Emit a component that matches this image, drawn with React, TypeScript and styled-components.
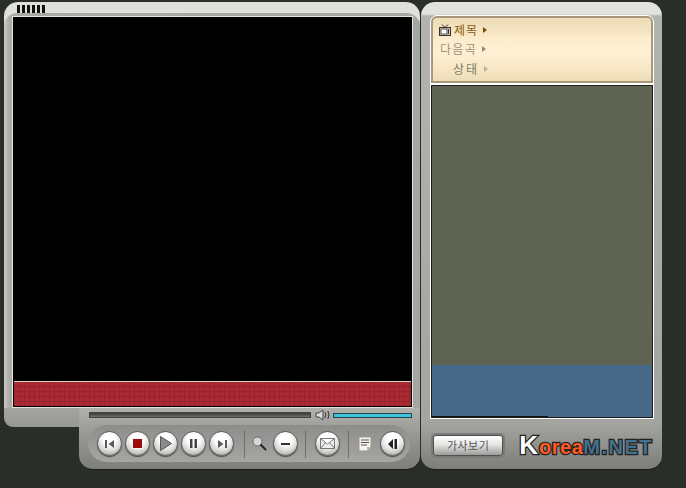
import React from 'react'
import styled, { createGlobalStyle } from 'styled-components'

const Global = createGlobalStyle`
  html, body { margin: 0; padding: 0; background: #2a2e2a; }
  body { font-family: "Noto Sans CJK KR", "Liberation Sans", sans-serif; overflow: hidden; }
`

const Player = styled.div`
  width: 686px;
  height: 488px;
  box-sizing: border-box;
  padding: 2px 0 0 4px;
  display: flex;
  gap: 1px;
`

const LeftColumn = styled.div`
  width: 416px;
  display: flex;
  flex-direction: column;
`

const ScreenPanel = styled.div`
  height: 406px;
  box-sizing: border-box;
  padding: 3px 8px 0 9px;
  border-radius: 14px 14px 0 0;
  background: linear-gradient(90deg, #c9cac6 0, #a9aaa6 6px, #a5a6a2 100%);
  background-color: #b5b6b2;
  box-shadow: inset 0 12px 0 -1px #dfdfdb;
`

const Grip = styled.div`
  height: 8px;
  margin: 0 0 4px 4px;
  display: flex;
  gap: 2px;
`

const GripBar = styled.span`
  width: 3px;
  height: 8px;
  background: #111;
`

const ScreenFrame = styled.div`
  height: 390px;
  box-sizing: border-box;
  border: 1px solid #000;
  outline: 1px solid #e6e6de;
  display: flex;
  flex-direction: column;
  background: #000;
`

const Video = styled.div`
  flex: 1;
  background: #000;
  border-bottom: 1px solid #d8d4c8;
`

const Caption = styled.div`
  height: 24px;
  background-color: #aa2a34;
  background-image:
    linear-gradient(90deg, rgba(120, 20, 30, 0.3) 1px, transparent 1px),
    linear-gradient(0deg, rgba(120, 20, 30, 0.3) 1px, transparent 1px);
  background-size: 5px 5px;
`

const LowerRow = styled.div`
  display: flex;
`

const Stub = styled.div`
  width: 75px;
  height: 19px;
  border-radius: 0 0 0 9px;
  background: linear-gradient(180deg, #a4a5a1, #979896);
`

const ControlPanel = styled.div`
  width: 341px;
  height: 62px;
  box-sizing: border-box;
  padding: 2px 8px 0 10px;
  border-radius: 0 0 14px 14px;
  background: linear-gradient(180deg, #b0b1ad 0, #9a9b97 40%, #7d7e7a 100%);
  border-bottom: 1px solid #1a1c1a;
`

const SeekRow = styled.div`
  height: 10px;
  display: flex;
  align-items: center;
`

const SeekTrack = styled.div`
  width: 223px;
  height: 6px;
  background: linear-gradient(180deg, #3a3a3a, #6e6e6e);
  border: 1px solid #444;
  box-sizing: border-box;
`

const VolumeIcon = styled.svg`
  width: 16px;
  height: 12px;
  margin: 0 3px 0 4px;
`

const VolumeTrack = styled.div`
  width: 79px;
  height: 5px;
  box-sizing: border-box;
  background: #3dc2dc;
  border: 1px solid #28444c;
`

const ButtonTray = styled.div`
  margin: 5px 0 0 -1px;
  height: 37px;
  width: 322px;
  box-sizing: border-box;
  padding: 0 6px 0 9px;
  border-radius: 19px;
  background: linear-gradient(180deg, #8d8e8b, #a6a7a3);
  display: flex;
  align-items: center;
  gap: 3px;

  svg {
    flex: none;
  }
`

const RoundButton = styled.button<{ $gapLeft?: number }>`
  width: 25px;
  height: 25px;
  padding: 0;
  margin-left: ${(p) => p.$gapLeft ?? 0}px;
  border: 1px solid #5e5f5c;
  border-radius: 50%;
  background: radial-gradient(circle at 50% 30%, #ffffff 30%, #d8d8d6 62%, #8e8f8c 100%);
  box-shadow: 0 1px 1px #4a4b48;
  display: flex;
  align-items: center;
  justify-content: center;
  flex: none;
`

const Divider = styled.span<{ $left: number; $right: number }>`
  width: 1px;
  height: 28px;
  background: #6f706d;
  margin: 0 ${(p) => p.$right}px 0 ${(p) => p.$left}px;
  flex: none;
`

const SidePanel = styled.div`
  width: 241px;
  height: 468px;
  box-sizing: border-box;
  padding: 14px 9px 0 10px;
  border-radius: 14px;
  border-bottom: 1px solid #1a1c1a;
  background: linear-gradient(180deg, #e2e2de 0, #e2e2de 12px, #b3b4b0 14px, #a4a5a1 420px, #7d7e7a 100%);
`

const InfoBox = styled.div`
  height: 67px;
  box-sizing: border-box;
  padding: 2px 0 0 5px;
  border: 2px solid #a8977a;
  outline: 1px solid #fff;
  border-radius: 6px 6px 0 0;
  background: linear-gradient(
    180deg,
    #eddcb6 0,
    #f6e6c4 24%,
    #fbebcb 30%,
    #fff0d4 55%,
    #f8e8c6 78%,
    #ecdcb6 100%
  );
  display: flex;
  flex-direction: column;
`

const InfoRow = styled.div<{ $indent?: number }>`
  height: 19.5px;
  padding-left: ${(p) => p.$indent ?? 0}px;
  display: flex;
  align-items: center;
`

const InfoIconSlot = styled.div`
  width: 15px;
  height: 14px;
  flex: none;
  display: flex;
  align-items: center;
`

const InfoLabel = styled.span<{ $color: string; $spacing: number }>`
  font-size: 12px;
  color: ${(p) => p.$color};
  letter-spacing: ${(p) => p.$spacing}px;
  line-height: 14px;
`

const Caret = styled.span<{ $color: string }>`
  width: 0;
  height: 0;
  margin-left: 5px;
  border-left: 4px solid ${(p) => p.$color};
  border-top: 3px solid transparent;
  border-bottom: 3px solid transparent;
`

const ListFrame = styled.div`
  margin-top: 2px;
  height: 333px;
  box-sizing: border-box;
  border: 1px solid #1c1c1c;
  outline: 1px solid #fff;
  background: #5f6352;
  display: flex;
  flex-direction: column;
  justify-content: flex-end;
`

const BlueBlock = styled.div`
  height: 52px;
  display: flex;
  align-items: flex-end;
  background: #48688a;
`

const ListProgress = styled.div`
  width: 116px;
  height: 1px;
  background: #111;
`

const SideFooter = styled.div`
  margin-top: 13px;
  display: flex;
  align-items: center;
  padding-left: 2px;
`

const LyricsButton = styled.button`
  width: 71px;
  height: 21px;
  padding: 0;
  border: 1px solid #50504e;
  outline: 2px solid #7a7b78;
  border-radius: 3px;
  background: linear-gradient(180deg, #fdfdfd, #e6e6e4 45%, #9b9c9a 100%);
  font-family: "Noto Sans CJK KR", sans-serif;
  font-size: 11px;
  letter-spacing: 0.5px;
  color: #555;
  display: flex;
  align-items: center;
  justify-content: center;
`

const Logo = styled.div`
  margin: 2px 0 0 16px;
  font-family: "Liberation Sans", sans-serif;
  font-weight: 700;
  display: flex;
  align-items: baseline;
  white-space: nowrap;
`

const LogoPart = styled.span<{ $size: number; $color: string; $spacing?: number }>`
  font-size: ${(p) => p.$size}px;
  color: ${(p) => p.$color};
  letter-spacing: ${(p) => p.$spacing ?? 0}px;
  -webkit-text-stroke: 2.5px #222;
  paint-order: stroke fill;
  line-height: 24px;
`

export default function App() {
  return (
    <Player>
      <Global />
      <LeftColumn>
        <ScreenPanel>
          <Grip>
            {[0, 1, 2, 3, 4, 5].map((i) => (
              <GripBar key={i} />
            ))}
          </Grip>
          <ScreenFrame>
            <Video />
            <Caption />
          </ScreenFrame>
        </ScreenPanel>
        <LowerRow>
          <Stub />
          <ControlPanel>
            <SeekRow>
              <SeekTrack />
              <VolumeIcon viewBox="0 0 16 12">
                <path d="M1 4h3l4-3v10L4 8H1z" fill="#ddd" stroke="#444" />
                <path d="M10 3q2 3 0 6M13 2q2 4 0 8" fill="none" stroke="#333" />
              </VolumeIcon>
              <VolumeTrack />
            </SeekRow>
            <ButtonTray>
              <RoundButton aria-label="previous">
                <svg width="10" height="8" viewBox="0 0 10 8">
                  <path d="M0 0h2v8H0zM9 0v8L3.500 4z" fill="#5a5a5a" />
                </svg>
              </RoundButton>
              <RoundButton aria-label="stop">
                <svg width="11" height="11" viewBox="0 0 11 11">
                  <rect width="11" height="11" fill="#f4f4f4" />
                  <rect x="1" y="1" width="9" height="9" fill="#9c0c0c" />
                </svg>
              </RoundButton>
              <RoundButton aria-label="play">
                <svg width="12" height="15" viewBox="0 0 12 15">
                  <path d="M.5.500l11 7-11 7z" fill="#8a8a88" stroke="#555" />
                </svg>
              </RoundButton>
              <RoundButton aria-label="pause">
                <svg width="7" height="9" viewBox="0 0 7 9">
                  <path d="M0 0h2.500v9H0zM4.500 0H7v9H4.500z" fill="#444" />
                </svg>
              </RoundButton>
              <RoundButton aria-label="next">
                <svg width="10" height="8" viewBox="0 0 10 8">
                  <path d="M8 0h2v8H8zM1 0v8l5.500-4z" fill="#5a5a5a" />
                </svg>
              </RoundButton>
              <Divider $left={7} $right={4} />
              <svg width="15" height="15" viewBox="0 0 15 15">
                <circle cx="5.500" cy="5.500" r="4.500" fill="#d0d8da" stroke="#6a6a6a" />
                <path d="M8.500 8.500L14 14" stroke="#222" strokeWidth="2" />
              </svg>
              <RoundButton aria-label="minus" $gapLeft={3}>
                <svg width="9" height="2" viewBox="0 0 9 2">
                  <rect width="9" height="2" fill="#333" />
                </svg>
              </RoundButton>
              <Divider $left={4} $right={6} />
              <RoundButton aria-label="mail">
                <svg width="15" height="11" viewBox="0 0 15 11">
                  <path d="M.5.5h14v10H.5zM.5.5l7 5.5 7-5.500M.5 10.500l5-6M14.500 10.500l-5-6" fill="#eee" stroke="#777" />
                </svg>
              </RoundButton>
              <Divider $left={5} $right={6} />
              <svg width="14" height="16" viewBox="0 0 14 16">
                <path d="M1 1h12v10l-4 4H1z" fill="#f4f2ea" stroke="#999" />
                <path d="M3 4h8M3 6.500h8M3 9h6" stroke="#555" />
                <path d="M13 11H9v4z" fill="#d8b888" />
              </svg>
              <RoundButton aria-label="toggle" $gapLeft={5}>
                <svg width="9" height="10" viewBox="0 0 9 10">
                  <path d="M5 0v10L0 5zM6.500 0H9v10H6.500z" fill="#222" />
                </svg>
              </RoundButton>
            </ButtonTray>
          </ControlPanel>
        </LowerRow>
      </LeftColumn>
      <SidePanel>
        <InfoBox>
          <InfoRow $indent={1}>
            <InfoIconSlot>
              <svg width="12" height="12" viewBox="0 0 12 12">
                <path d="M3 .500l3 3 3-3" fill="none" stroke="#333" />
                <rect x=".5" y="3.500" width="11" height="8" fill="#d8d0b8" stroke="#333" />
                <rect x="2" y="5" width="6" height="5" fill="#fff" stroke="#555" />
                <path d="M9.500 5v5" stroke="#333" />
              </svg>
            </InfoIconSlot>
            <InfoLabel $color="#8a5a10" $spacing={1}>제목</InfoLabel>
            <Caret $color="#7a4a08" />
          </InfoRow>
          <InfoRow $indent={2}>
            <InfoLabel $color="#a58f78" $spacing={1.3}>다음곡</InfoLabel>
            <Caret $color="#9a8a78" />
          </InfoRow>
          <InfoRow>
            <InfoIconSlot />
            <InfoLabel $color="#7e7a68" $spacing={2}>상태</InfoLabel>
            <Caret $color="#b8b09c" />
          </InfoRow>
        </InfoBox>
        <ListFrame>
          <BlueBlock>
            <ListProgress />
          </BlueBlock>
        </ListFrame>
        <SideFooter>
          <LyricsButton>가사보기</LyricsButton>
          <Logo>
            <LogoPart $size={26} $color="#fff" $spacing={1}>K</LogoPart>
            <LogoPart $size={20} $color="#ff5a1e" $spacing={0.5}>orea</LogoPart>
            <LogoPart $size={20} $color="#44708c" $spacing={1.5}>M.NET</LogoPart>
          </Logo>
        </SideFooter>
      </SidePanel>
    </Player>
  )
}
